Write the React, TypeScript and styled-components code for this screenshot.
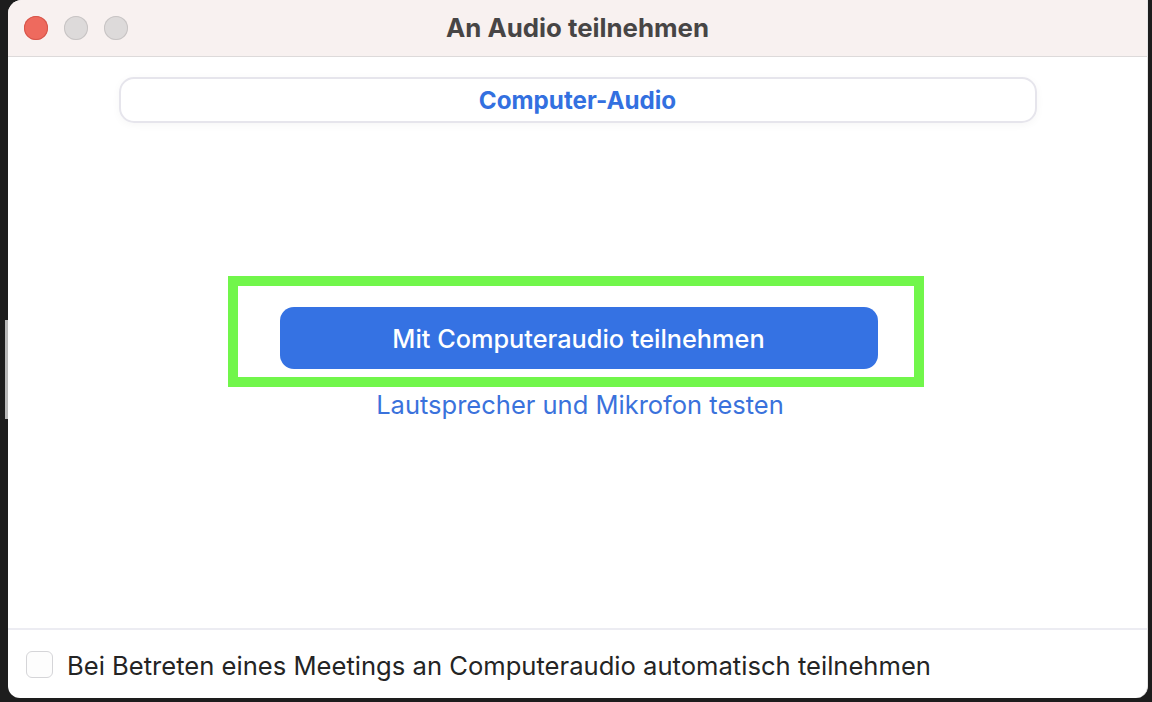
import React from "react";
import styled, { createGlobalStyle } from "styled-components";

const Global = createGlobalStyle`
  html, body { margin: 0; padding: 0; background: #1d1d1d; }
  body { width: 1152px; height: 702px; overflow: hidden; font-family: Inter, "Liberation Sans", sans-serif; }
  #root { height: 702px; }
`;

const Screen = styled.div`
  position: relative;
  height: 702px;
  padding: 0 4px 4px 8px;
  box-sizing: border-box;
  display: flex;
`;

const SideHandle = styled.div`
  position: absolute;
  left: 5px;
  top: 320px;
  width: 3px;
  height: 99px;
  background: #b8b8b8;
`;

const Window = styled.div`
  flex: 1;
  display: flex;
  flex-direction: column;
  background: #ffffff;
  border-radius: 14px 0 12px 12px;
  overflow: hidden;
  border-right: 1px solid #e6e6e6;
`;

const TitleBar = styled.div`
  height: 56px;
  flex: none;
  background: #f8f1f0;
  border-bottom: 1px solid #dddada;
  display: grid;
  grid-template-columns: 1fr auto 1fr;
  align-items: center;
`;

const Lights = styled.div`
  display: flex;
  gap: 16px;
  padding-left: 16px;
`;

const Light = styled.span<{ $c: string; $b: string }>`
  width: 24px;
  height: 24px;
  border-radius: 50%;
  background: ${(p) => p.$c};
  box-shadow: inset 0 0 0 1px ${(p) => p.$b};
`;

const Title = styled.div`
  font-size: 25.8px;
  font-weight: 700;
  color: #474545;
  padding-bottom: 2px;
`;

const Body = styled.div`
  flex: 1;
  display: flex;
  flex-direction: column;
  align-items: center;
  padding-top: 20px;
`;

const Tab = styled.div`
  width: 918px;
  height: 46px;
  box-sizing: border-box;
  border: 2px solid #e6e5ec;
  border-radius: 15px;
  box-shadow: 0 2px 8px rgba(0, 0, 0, 0.04);
  display: flex;
  align-items: center;
  justify-content: center;
  font-size: 24.2px;
  font-weight: 700;
  color: #3370e0;
`;

const Highlight = styled.div`
  margin-top: 153px;
  margin-right: 4px;
  width: 696px;
  height: 111px;
  box-sizing: border-box;
  border: 10px solid #71f64b;
  display: flex;
  align-items: flex-start;
  justify-content: center;
  padding-top: 21px;
`;

const PrimaryButton = styled.button`
  width: 598px;
  height: 62px;
  border: none;
  border-radius: 14px;
  background: #3572e3;
  color: #ffffff;
  font-family: inherit;
  font-size: 25.3px;
  font-weight: 500;
  cursor: pointer;
  margin-left: 6px;
`;

const Link = styled.a`
  margin-top: 2px;
  margin-left: 5px;
  font-size: 25.5px;
  color: #3a72dc;
  text-decoration: none;
  line-height: 32px;
`;

const Footer = styled.div`
  height: 68px;
  flex: none;
  border-top: 2px solid #ececf2;
  display: flex;
  align-items: center;
  padding-left: 18px;
  gap: 14px;
`;

const Check = styled.span`
  width: 25px;
  height: 25px;
  border: 1.5px solid #d5d5d8;
  border-radius: 6px;
  background: #fdfdfd;
`;

const FooterText = styled.span`
  font-size: 25.6px;
  color: #242424;
  padding-top: 2px;
`;

export default function App() {
  return (
    <>
      <Global />
      <Screen>
        <SideHandle />
        <Window>
          <TitleBar>
            <Lights>
              <Light $c="#ee6a5e" $b="#d6564b" />
              <Light $c="#dddada" $b="#c8c4c4" />
              <Light $c="#dddada" $b="#c8c4c4" />
            </Lights>
            <Title>An Audio teilnehmen</Title>
            <div />
          </TitleBar>
          <Body>
            <Tab>Computer-Audio</Tab>
            <Highlight>
              <PrimaryButton>Mit Computeraudio teilnehmen</PrimaryButton>
            </Highlight>
            <Link href="#">Lautsprecher und Mikrofon testen</Link>
          </Body>
          <Footer>
            <Check />
            <FooterText>Bei Betreten eines Meetings an Computeraudio automatisch teilnehmen</FooterText>
          </Footer>
        </Window>
      </Screen>
    </>
  );
}
